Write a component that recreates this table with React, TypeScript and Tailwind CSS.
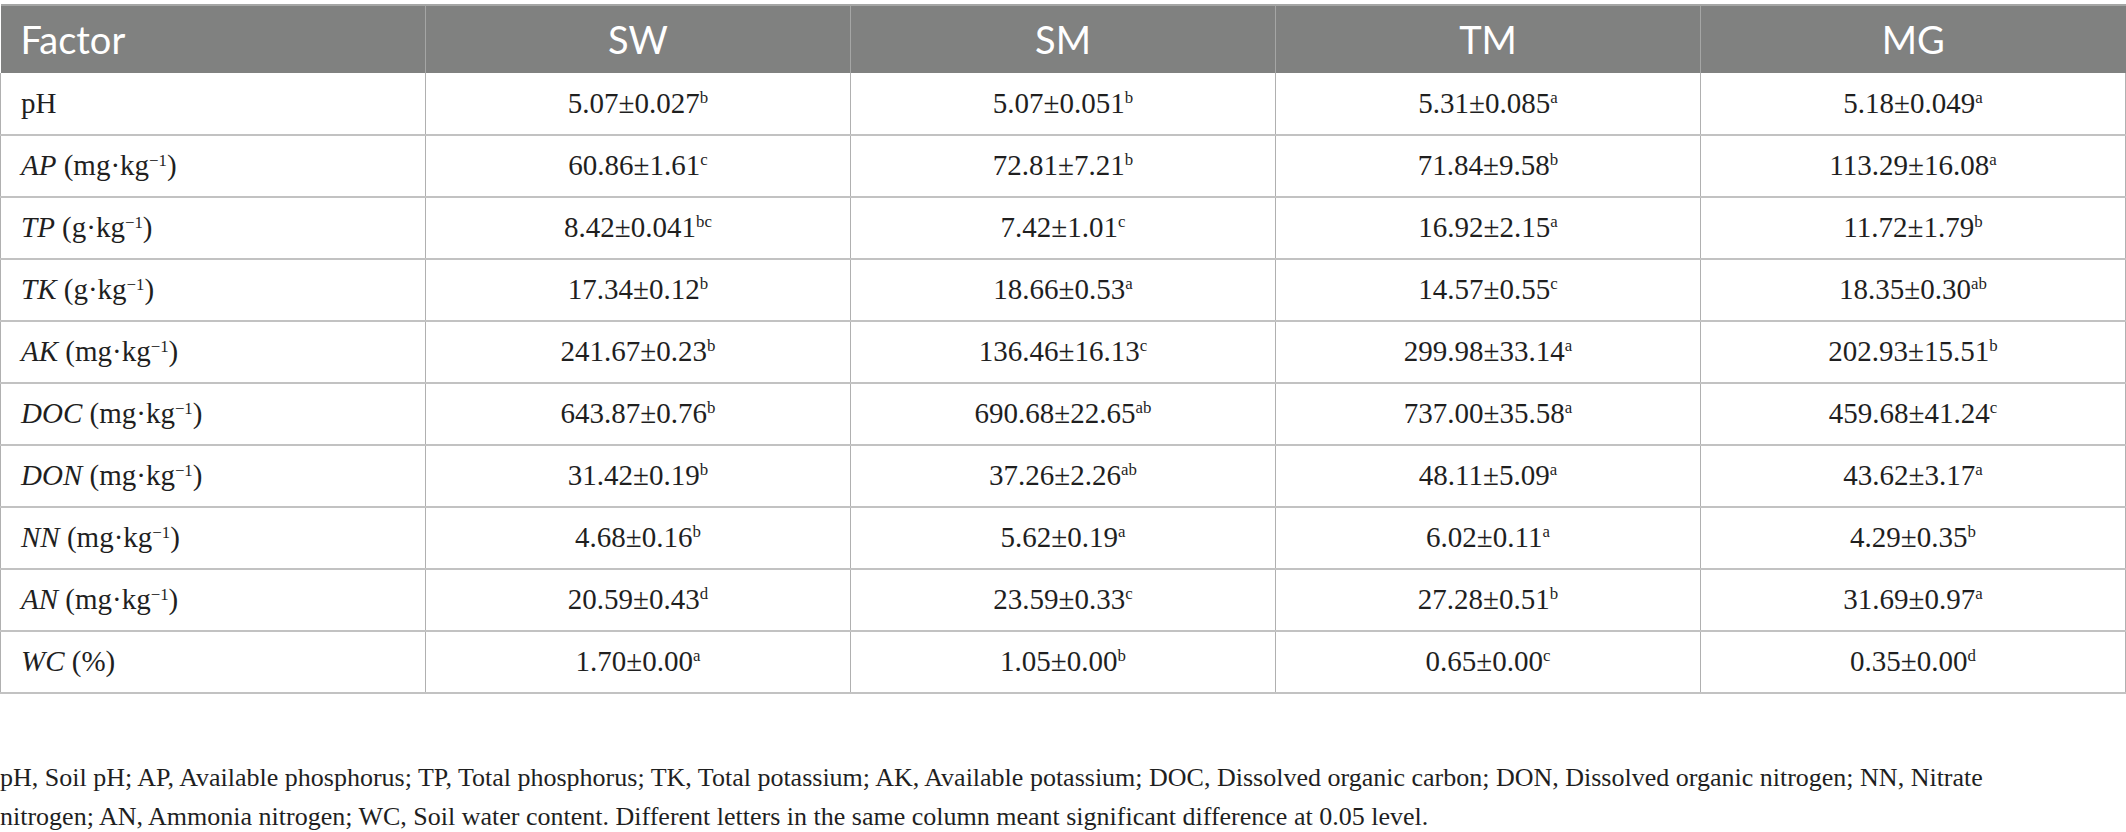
const columns = ['SW', 'SM', 'TM', 'MG'];

type Row = { name: string; italic: boolean; unit: 'mg' | 'g' | 'pct' | null; values: string[][] };

const rows: Row[] = [
  { name: 'pH', italic: false, unit: null, values: [['5.07', '0.027', 'b'], ['5.07', '0.051', 'b'], ['5.31', '0.085', 'a'], ['5.18', '0.049', 'a']] },
  { name: 'AP', italic: true, unit: 'mg', values: [['60.86', '1.61', 'c'], ['72.81', '7.21', 'b'], ['71.84', '9.58', 'b'], ['113.29', '16.08', 'a']] },
  { name: 'TP', italic: true, unit: 'g', values: [['8.42', '0.041', 'bc'], ['7.42', '1.01', 'c'], ['16.92', '2.15', 'a'], ['11.72', '1.79', 'b']] },
  { name: 'TK', italic: true, unit: 'g', values: [['17.34', '0.12', 'b'], ['18.66', '0.53', 'a'], ['14.57', '0.55', 'c'], ['18.35', '0.30', 'ab']] },
  { name: 'AK', italic: true, unit: 'mg', values: [['241.67', '0.23', 'b'], ['136.46', '16.13', 'c'], ['299.98', '33.14', 'a'], ['202.93', '15.51', 'b']] },
  { name: 'DOC', italic: true, unit: 'mg', values: [['643.87', '0.76', 'b'], ['690.68', '22.65', 'ab'], ['737.00', '35.58', 'a'], ['459.68', '41.24', 'c']] },
  { name: 'DON', italic: true, unit: 'mg', values: [['31.42', '0.19', 'b'], ['37.26', '2.26', 'ab'], ['48.11', '5.09', 'a'], ['43.62', '3.17', 'a']] },
  { name: 'NN', italic: true, unit: 'mg', values: [['4.68', '0.16', 'b'], ['5.62', '0.19', 'a'], ['6.02', '0.11', 'a'], ['4.29', '0.35', 'b']] },
  { name: 'AN', italic: true, unit: 'mg', values: [['20.59', '0.43', 'd'], ['23.59', '0.33', 'c'], ['27.28', '0.51', 'b'], ['31.69', '0.97', 'a']] },
  { name: 'WC', italic: true, unit: 'pct', values: [['1.70', '0.00', 'a'], ['1.05', '0.00', 'b'], ['0.65', '0.00', 'c'], ['0.35', '0.00', 'd']] },
];

function Unit({ unit }: { unit: Row['unit'] }) {
  if (unit === 'pct') return <span> (%)</span>;
  if (unit === 'mg' || unit === 'g')
    return (
      <span>
        {' '}({unit}·kg<sup className="-top-[0.55em] text-[0.58em] leading-none">−1</sup>)
      </span>
    );
  return null;
}

export default function App() {
  return (
    <div className="min-h-screen bg-white pt-1 font-['Liberation_Serif','Times_New_Roman',serif] text-[#1f1f1f]">
      <table className="w-full table-fixed border-collapse">
        <thead>
          <tr className="h-[68px] bg-[#808180] font-['Lato','Open_Sans',sans-serif] text-white">
            <th className="border-t-2 border-r border-[#a5a6a5] px-5 text-left text-[38px] font-normal">Factor</th>
            {columns.map((c) => (
              <th key={c} className="border-t-2 border-r border-[#a5a6a5] text-center text-[38px] font-normal last:border-r-0">
                {c}
              </th>
            ))}
          </tr>
        </thead>
        <tbody className="text-[29px]">
          {rows.map((r) => (
            <tr key={r.name} className="h-[62px] border-b-2 border-[#c2c2c2]">
              <td className="border-x border-[#b0b0b0] px-5">
                <span className={r.italic ? 'italic' : ''}>{r.name}</span>
                <Unit unit={r.unit} />
              </td>
              {r.values.map(([a, b, s], i) => (
                <td key={i} className="border-r border-[#b0b0b0] text-center">
                  {a}±{b}
                  <sup className="-top-[0.6em] text-[0.58em] leading-none">{s}</sup>
                </td>
              ))}
            </tr>
          ))}
        </tbody>
      </table>
      <p className="mt-[64px] text-[26px] leading-[39px]">
        pH, Soil pH; AP, Available phosphorus; TP, Total phosphorus; TK, Total potassium; AK, Available potassium; DOC, Dissolved organic carbon; DON, Dissolved organic nitrogen; NN, Nitrate
        <br />
        nitrogen; AN, Ammonia nitrogen; WC, Soil water content. Different letters in the same column meant significant difference at 0.05 level.
      </p>
    </div>
  );
}
